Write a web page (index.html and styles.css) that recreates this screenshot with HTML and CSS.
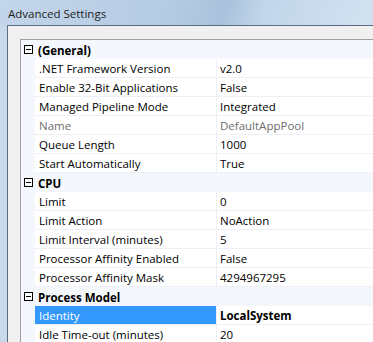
FILE: index.html
```html
<!DOCTYPE html>
<html lang="en">
  <head>
    <meta charset="UTF-8" />
    <title>Advanced Settings</title>
    <link rel="stylesheet" href="styles.css">
  </head>
  <body>
    <div class="titlebar">Advanced Settings</div>

    <div class="client">
      <div class="grid">
        <div class="category">
          <span class="toggle"></span>
          <span class="cat-name">(General)</span>
        </div>
        <div class="row">
          <div class="name">.NET Framework Version</div>
          <div class="value">v2.0</div>
        </div>
        <div class="row">
          <div class="name">Enable 32-Bit Applications</div>
          <div class="value">False</div>
        </div>
        <div class="row">
          <div class="name">Managed Pipeline Mode</div>
          <div class="value">Integrated</div>
        </div>
        <div class="row readonly">
          <div class="name">Name</div>
          <div class="value">DefaultAppPool</div>
        </div>
        <div class="row">
          <div class="name">Queue Length</div>
          <div class="value">1000</div>
        </div>
        <div class="row">
          <div class="name">Start Automatically</div>
          <div class="value">True</div>
        </div>

        <div class="category">
          <span class="toggle"></span>
          <span class="cat-name">CPU</span>
        </div>
        <div class="row">
          <div class="name">Limit</div>
          <div class="value">0</div>
        </div>
        <div class="row">
          <div class="name">Limit Action</div>
          <div class="value">NoAction</div>
        </div>
        <div class="row">
          <div class="name">Limit Interval (minutes)</div>
          <div class="value">5</div>
        </div>
        <div class="row">
          <div class="name">Processor Affinity Enabled</div>
          <div class="value">False</div>
        </div>
        <div class="row">
          <div class="name">Processor Affinity Mask</div>
          <div class="value">4294967295</div>
        </div>

        <div class="category">
          <span class="toggle"></span>
          <span class="cat-name">Process Model</span>
        </div>
        <div class="row selected">
          <div class="name">Identity</div>
          <div class="value modified">LocalSystem</div>
        </div>
        <div class="row">
          <div class="name">Idle Time-out (minutes)</div>
          <div class="value">20</div>
        </div>
      </div>
    </div>
  </body>
</html>
```

FILE: styles.css
```css
:root {
  --frame: #c9d9ea;
  --frame-line: #5b6b80;
  --face: #f0f0f0;
  --grid-bg: #f4f7fb;
  --grid-line: #edf1f7;
  --select: #3399ff;
}

* {
  margin: 0;
  padding: 0;
  box-sizing: border-box;
}

body {
  width: 373px;
  height: 342px;
  overflow: hidden;
  background: var(--frame);
  font-family: "Open Sans", "Noto Sans", sans-serif;
  font-size: 11.5px;
  color: #000;
}

/* window caption */
.titlebar {
  height: 25px;
  padding: 5px 0 0 8px;
  line-height: 17px;
  color: #1e1e1e;
  background: linear-gradient(110deg, #c3d5ea 0%, #b5cce3 45%, #a9c2dc 60%, #c2d6ea 70%, #d3e2f1 100%);
}

.client {
  margin-left: 7px;
  height: 317px;
  background: var(--face);
  border-top: 1px solid var(--frame-line);
  border-left: 1px solid var(--frame-line);
  padding: 13px 0 0 12px;
}

.grid {
  height: 100%;
  background: var(--grid-bg);
  border-top: 1px solid #a0a0a0;
  border-left: 1px solid #a0a0a0;
}

.category {
  display: flex;
  align-items: center;
  height: 19px;
  font-weight: 700;
}

.cat-name {
  padding-top: 1px;
}

.toggle {
  position: relative;
  width: 9px;
  height: 9px;
  margin: 0 5px 0 3px;
  border: 1px solid #000;
  background: #fff;
}

.toggle::after {
  content: "";
  position: absolute;
  left: 1px;
  top: 3px;
  width: 5px;
  height: 1px;
  background: #000;
}

.row {
  display: flex;
  height: 19px;
  margin-left: 14px;
  background: #fff;
  border-bottom: 1px solid var(--grid-line);
}

.name,
.value {
  padding-top: 1px;
  line-height: 17px;
  white-space: nowrap;
  overflow: hidden;
}

.name {
  width: 182px;
  padding-left: 4px;
  border-right: 1px solid var(--grid-line);
}

.value {
  flex: 1;
  padding-left: 3px;
}

.readonly {
  color: #6d6d6d;
}

.selected .name {
  background: var(--select);
  color: #fff;
}

.modified {
  font-weight: 700;
}
```
